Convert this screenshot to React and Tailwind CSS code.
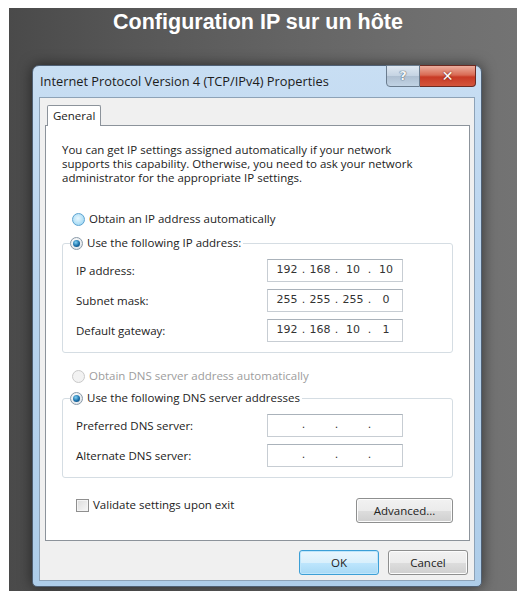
import React from "react";

const ui = "font-['Open_Sans','Noto_Sans',sans-serif]";

function Radio({ state }) {
  // state: "hover" | "checked" | "disabled"
  if (state === "checked") {
    return (
      <span className="w-[13px] h-[13px] rounded-full border border-[#8a9aa8] bg-[radial-gradient(circle_at_40%_35%,#ffffff,#d8dee4)] flex items-center justify-center shrink-0">
        <span className="w-[7px] h-[7px] rounded-full bg-[radial-gradient(circle_at_40%_35%,#7fd0f4,#1a6fa8_55%,#0d3f6e)]" />
      </span>
    );
  }
  if (state === "disabled") {
    return (
      <span className="w-[13px] h-[13px] rounded-full border border-[#c9c9c9] bg-[#f2f2f2] shrink-0" />
    );
  }
  return (
    <span className="w-[13px] h-[13px] rounded-full border border-[#5da3d0] bg-[radial-gradient(circle_at_45%_40%,#e8f7fe,#a9dcf5_70%,#86c8ec)] shrink-0" />
  );
}

function IpField({ parts }) {
  const seg = parts || ["", "", "", ""];
  return (
    <div className="w-[136px] h-[23px] border border-[#c7cdd3] border-t-[#aab2ba] bg-white flex items-center pl-[6px] text-[11px] text-[#333] font-['DejaVu_Sans',sans-serif]">
      {seg.map((s, i) => (
        <React.Fragment key={i}>
          <span className="w-[26px] text-center">{s}</span>
          {i < 3 && <span className="w-[7px] text-center">.</span>}
        </React.Fragment>
      ))}
    </div>
  );
}

function FieldRow({ label, parts }) {
  return (
    <div className="flex items-center">
      <span className="w-[197px] pl-[6px]">{label}</span>
      <IpField parts={parts} />
    </div>
  );
}

function GroupBox({ legend, children }) {
  return (
    <fieldset className="border border-[#d5dde3] rounded-[3px] px-[7px] pb-[10px] m-0 min-w-0">
      <legend className="p-0">
        <div className="flex items-center gap-[4px] h-[16px] pr-[2px]">
          <Radio state="checked" />
          <span>{legend}</span>
        </div>
      </legend>
      <div className="flex flex-col gap-[7px] mt-[8px]">{children}</div>
    </fieldset>
  );
}

function Button({ children, focused, className = "" }) {
  return (
    <div
      className={`h-[25px] rounded-[3px] border flex items-center justify-center text-[#222] ${
        focused
          ? "border-[#3c9fd6] bg-[linear-gradient(#eaf6fd,#d9f0fc_50%,#bee6fd_51%,#a7d9f5)] shadow-[inset_0_0_0_1px_#bfe6fb]"
          : "border-[#8e8f8f] bg-[linear-gradient(#f2f2f2,#ebebeb_50%,#dddddd_51%,#cfcfcf)] shadow-[inset_0_0_0_1px_#fcfcfc]"
      } ${className}`}
    >
      {children}
    </div>
  );
}

export default function App() {
  return (
    <div className="w-[517px] h-[591px] bg-white pt-[8px] pl-[9px] overflow-hidden">
      <div className="h-[583px] w-[508px] bg-[linear-gradient(90deg,#4a4a4a_0%,#575757_25%,#646464_55%,#6e6e6e_80%,#737373_100%)] flex flex-col">
        <h1 className="h-[28px] leading-[28px] pr-[10px] text-center text-white font-bold text-[21.5px] font-['Liberation_Sans',Arial,sans-serif]">
          Configuration IP sur un hôte
        </h1>

        {/* dialog window */}
        <div className="mt-[29px] ml-[23px] w-[450px] h-[522px] rounded-t-[7px] rounded-b-[5px] border border-[#4f6074] bg-[linear-gradient(#c8def3,#b9d4ee_40%,#aecde9)] shadow-[0_0_14px_rgba(0,0,0,0.55)] flex flex-col">
          {/* title bar */}
          <div className="h-[31px] flex items-start">
            <span className={`${ui} pl-[7px] pt-[6px] text-[12.8px] text-[#1c1c1c]`}>
              Internet Protocol Version 4 (TCP/IPv4) Properties
            </span>
            <div className="ml-auto mr-[5px] -mt-px flex">
              <div className="w-[34px] h-[22px] rounded-bl-[4px] border border-[#6a7c8e] bg-[linear-gradient(#dfe8f1,#c4d3e2_50%,#aebfd1_51%,#c1d3e4)] flex items-center justify-center">
                <span className="text-[13px] font-bold text-[#f3f6f9] font-['DejaVu_Sans',sans-serif] [text-shadow:0_0_1px_#3e5366,0_0_1px_#3e5366]">?</span>
              </div>
              <div className="w-[56px] h-[22px] rounded-br-[4px] border border-l-0 border-[#6b2a22] bg-[linear-gradient(#ecad9d,#d96b55_45%,#c83a26_55%,#d3553c)] flex items-center justify-center">
                <span className="text-[14px] font-bold text-white font-['DejaVu_Sans',sans-serif] [text-shadow:0_0_2px_#5a1a10]">✕</span>
              </div>
            </div>
          </div>

          {/* client area */}
          <div className={`${ui} text-[11.5px] text-[#222] mx-[6px] flex-1 mb-[5px] border border-[#8da2b7] bg-[#f0f0f0] flex flex-col`}>
            {/* tab header */}
            <div className="pt-[7px] pl-[7px] flex">
              <div className="relative z-10 h-[21px] px-[5px] border border-b-0 border-[#8c939b] rounded-t-[2px] bg-white flex items-center">
                General
              </div>
            </div>

            {/* tab page */}
            <div className="-mt-px ml-[5px] w-[425px] h-[416px] border border-[#8c939b] bg-white px-[16px] pt-[17px] flex flex-col">
              <p className="leading-[14px]">
                You can get IP settings assigned automatically if your network
                <br />
                supports this capability. Otherwise, you need to ask your network
                <br />
                administrator for the appropriate IP settings.
              </p>

              <div className="mt-[26px] pl-[10px] flex items-center gap-[4px] h-[16px]">
                <Radio state="hover" />
                <span>Obtain an IP address automatically</span>
              </div>

              <div className="mt-[8px]">
                <GroupBox legend="Use the following IP address:">
                  <FieldRow label="IP address:" parts={["192", "168", "10", "10"]} />
                  <FieldRow label="Subnet mask:" parts={["255", "255", "255", "0"]} />
                  <FieldRow label="Default gateway:" parts={["192", "168", "10", "1"]} />
                </GroupBox>
              </div>

              <div className="mt-[15px] pl-[10px] flex items-center gap-[4px] h-[16px] text-[#9d9d9d]">
                <Radio state="disabled" />
                <span>Obtain DNS server address automatically</span>
              </div>

              <div className="mt-[6px]">
                <GroupBox legend="Use the following DNS server addresses">
                  <FieldRow label="Preferred DNS server:" />
                  <FieldRow label="Alternate DNS server:" />
                </GroupBox>
              </div>

              <div className="mt-[20px] flex items-start justify-between">
                <div className="pl-[14px] flex items-center gap-[4px] h-[14px]">
                  <span className="w-[13px] h-[13px] border border-[#8f8f8f] bg-[linear-gradient(135deg,#dcdcdc,#f7f7f7)] shadow-[inset_0_0_0_1px_#f4f4f4]" />
                  <span>Validate settings upon exit</span>
                </div>
                <Button className="w-[97px]">Advanced...</Button>
              </div>
            </div>

            {/* dialog buttons */}
            <div className="mt-[9px] pr-[6px] flex justify-end gap-[9px]">
              <Button focused className="w-[80px]">OK</Button>
              <Button className="w-[80px]">Cancel</Button>
            </div>
          </div>
        </div>
      </div>
    </div>
  );
}
